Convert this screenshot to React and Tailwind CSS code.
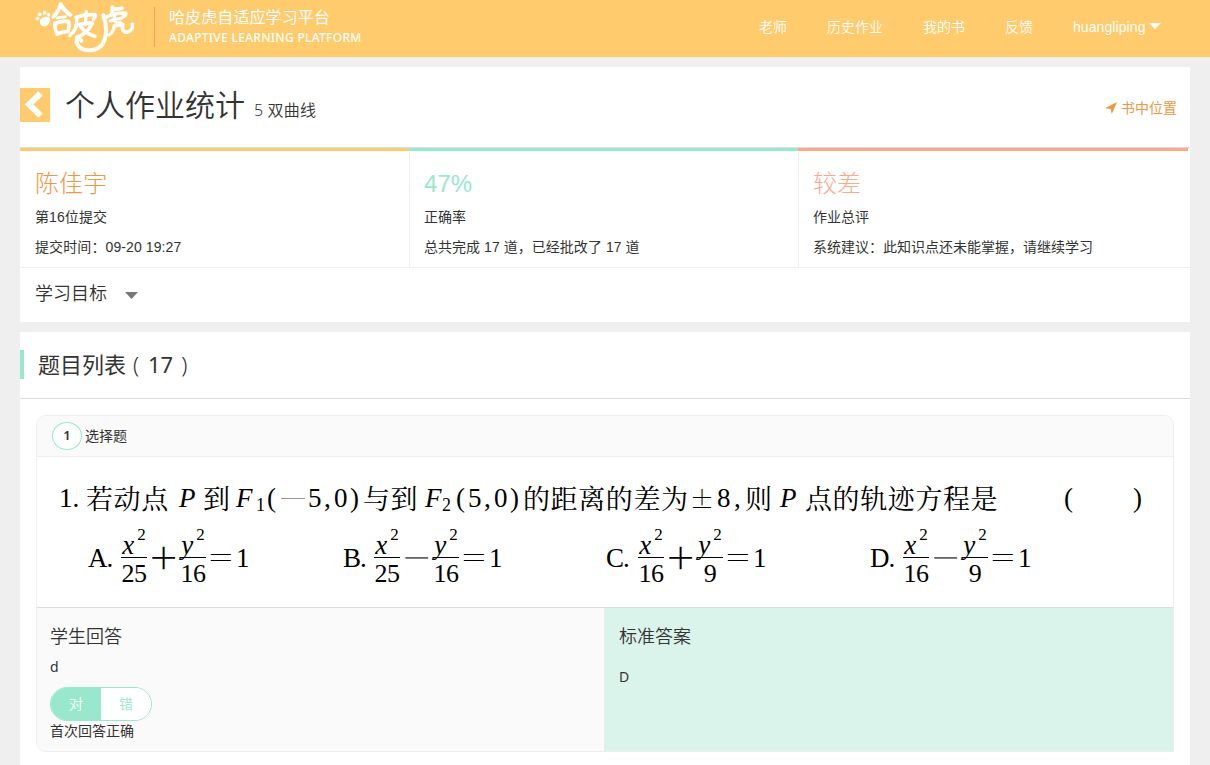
const CJK = "font-['Liberation_Sans','Noto_Sans_CJK_SC',sans-serif]";
const UI = "font-['Noto_Sans','Noto_Sans_CJK_SC',sans-serif]";

function Logo() {
  return (
    <svg width="104" height="56" viewBox="0 0 312 168" className="shrink-0" fill="none" stroke="#fff" strokeWidth="12" strokeLinecap="round" strokeLinejoin="round">
      <g fill="#fff" stroke="none">
        <path d="M18 66 C16 54 28 50 38 50 C50 50 50 60 45 69 C42 78 34 81 29 79 C22 78 18 73 18 66Z" />
        <circle cx="10" cy="56" r="5.500" />
        <ellipse cx="17" cy="43" rx="5.500" ry="6" />
        <ellipse cx="32" cy="38" rx="6" ry="6.500" />
        <ellipse cx="44" cy="44" rx="4.500" ry="5.500" />
      </g>
      <path d="M80 13 C76 28 66 42 58 51" />
      <path d="M80 13 C88 26 98 38 109 45" />
      <path d="M70 54 L94 50" strokeWidth="9" />
      <path d="M62 69 C62 80 64 92 70 103 C78 96 92 96 102 94 C105 84 107 74 104 65 C92 63 74 65 64 70" strokeWidth="11" />
      <path d="M126 52 C142 46 162 43 183 44 C186 48 182 54 178 58" strokeWidth="11" />
      <path d="M157 34 L154 74" strokeWidth="10" />
      <path d="M128 54 C130 76 122 96 108 106" strokeWidth="11" />
      <path d="M136 74 C150 70 164 68 175 69 C166 88 148 106 128 112" strokeWidth="11" />
      <path d="M140 80 C150 94 166 104 182 109" strokeWidth="11" />
      <path d="M236 22 L234 44" strokeWidth="12" />
      <path d="M238 29 L264 25" strokeWidth="11" />
      <path d="M210 55 C224 44 252 38 275 39 C276 43 272 48 267 51" strokeWidth="11" />
      <path d="M208 46 C218 74 222 112 202 137 C184 156 144 156 132 136 C122 119 132 108 142 122" strokeWidth="12" />
      <path d="M228 63 C242 57 252 55 264 55 M242 46 C238 66 246 70 259 67" strokeWidth="9" />
      <path d="M241 76 C240 88 235 98 226 105" strokeWidth="10" />
      <path d="M247 76 L266 73 C263 91 270 99 281 96 C292 93 298 82 295 73" strokeWidth="11" />
    </svg>
  );
}

function Seg({ w, children, className = "" }) {
  return <span className={"shrink-0 whitespace-nowrap " + className} style={{ width: w }}>{children}</span>;
}

const han = "font-['Noto_Serif_CJK_SC','Noto_Sans_CJK_SC',serif] text-[27px] font-normal tracking-[0.600px]";
const thin = "font-['Noto_Serif_CJK_SC',serif] font-extralight";

function QuestionLine() {
  return (
    <div className="flex h-[40px] items-center leading-[40px] text-[27px] text-black">
      <Seg w={27}>1.</Seg>
      <Seg w={93} className={han}>若动点</Seg>
      <Seg w={24} className="italic">P</Seg>
      <Seg w={33} className={han}>到</Seg>
      <Seg w={20} className="italic">F</Seg>
      <Seg w={11} className="text-[18px] translate-y-[7px]">1</Seg>
      <Seg w={14}>(</Seg>
      <Seg w={27}><span className="block h-px w-[24px] bg-[#999]" aria-label="−" /></Seg>
      <Seg w={16}>5</Seg>
      <Seg w={10}>,</Seg>
      <Seg w={16}>0</Seg>
      <Seg w={13}>)</Seg>
      <Seg w={62} className={han}>与到</Seg>
      <Seg w={17} className="italic">F</Seg>
      <Seg w={14} className="text-[18px] translate-y-[7px]">2</Seg>
      <Seg w={12}>(</Seg>
      <Seg w={16}>5</Seg>
      <Seg w={10}>,</Seg>
      <Seg w={16}>0</Seg>
      <Seg w={13}>)</Seg>
      <Seg w={167} className={han}>的距离的差为</Seg>
      <Seg w={27} className={thin + " text-[24px]"}>±</Seg>
      <Seg w={17}>8</Seg>
      <Seg w={11}>,</Seg>
      <Seg w={35} className={han}>则</Seg>
      <Seg w={25} className="italic">P</Seg>
      <Seg w={259} className={han}>点的轨迹方程是</Seg>
      <Seg w={69}>(</Seg>
      <Seg w={12}>)</Seg>
    </div>
  );
}

function Frac({ v, d }) {
  return (
    <span className="flex w-[26px] shrink-0 flex-col items-center">
      <span className="flex h-[28px] items-end leading-[24px]">
        <span className="text-[27px] italic leading-[24px] w-[15px]">{v}</span>
        <sup className="self-start text-[17px] leading-[12px] top-0">2</sup>
      </span>
      <span className="h-px w-full bg-black" />
      <span className="h-[28px] text-[26px] leading-[32px] tracking-[-0.500px]">{d}</span>
    </span>
  );
}

function Option({ letter, op, a, b, w, lw }) {
  return (
    <div className="flex shrink-0 items-center text-[27px] leading-[32px] text-black" style={{ width: w }}>
      <span className="shrink-0 tracking-[-1px]" style={{ width: lw }}>{letter}.</span>
      <Frac v="x" d={a} />
      <span className={"flex w-[33px] shrink-0 justify-center " + thin + (op === "−" ? " text-[#666]" : "")}>
        <span className="inline-block -translate-y-[3px] scale-x-[1.7] scale-y-[1.6]">{op}</span>
      </span>
      <Frac v="y" d={b} />
      <span className={"flex w-[30px] shrink-0 justify-center " + thin}>
        <span className="inline-block -translate-y-[2px] scale-x-[1.5]">=</span>
      </span>
      <span>1</span>
    </div>
  );
}

function Stat({ title, color, bar, body, lines, w }) {
  return (
    <div className={"flex shrink-0 flex-col border-t-[3px] " + bar} style={{ width: w }}>
      <div className={"flex h-[116px] flex-col pt-[18px] " + body}>
        <div className={"h-[33px] text-[24px] font-light leading-[30px] " + color}>{title}</div>
        {lines.map((l) => (
          <div key={l} className="h-[30px] whitespace-pre text-[14px] leading-[30px]">{l}</div>
        ))}
      </div>
    </div>
  );
}

export default function App() {
  return (
    <div className={"h-[765px] w-[1210px] overflow-hidden bg-[#efefef] text-[#333] " + CJK}>
      <header className="flex h-[57px] bg-[#ffcb6c] text-white">
        <div className="flex w-[154px] pl-[34px]"><Logo /></div>
        <div className="mt-[7px] h-[40px] w-px bg-[#f4a04e]" />
        <div className={"ml-[14px] mt-[7px] flex w-[560px] flex-col " + UI}>
          <span className="text-[16px] leading-[21px] tracking-[0.100px]">哈皮虎自适应学习平台</span>
          <span className="text-[12px] font-medium leading-[19px] tracking-[0.300px]">ADAPTIVE LEARNING PLATFORM</span>
        </div>
        <nav className="ml-[30px] flex h-[54px] items-center text-[14px] font-[350]">
          <a className="w-[68px]">老师</a>
          <a className="w-[96px]">历史作业</a>
          <a className="w-[82px]">我的书</a>
          <a className="w-[68px]">反馈</a>
          <a className="flex items-center font-normal tracking-[0.080px]">
            huangliping
            <svg width="12" height="6" viewBox="0 0 12 6" className="ml-[3px] -translate-y-px" fill="#fff"><path d="M0 0H12L6 6Z" /></svg>
          </a>
        </nav>
      </header>

      <section className="mx-[20px] mt-[10px] h-[255px] bg-white">
        <div className="flex h-[81px] border-b border-[#ddd]">
          <div className="mt-[21px] flex h-[34px] w-[30px] items-center bg-[#ffcb6c] pl-[3px]">
            <svg width="22" height="30" viewBox="0 0 22 30" fill="none" stroke="#fff" strokeWidth="6"><path d="M17.500 3.500L6 14.500L17.500 25.500" /></svg>
          </div>
          <h1 className={"ml-[15px] flex items-baseline pt-[14px] font-[350] " + UI}>
            <span className="text-[30px] leading-[48px]">个人作业统计</span>
            <small className="ml-[9px] text-[16px] leading-[24px] tracking-[0.150px]">5 双曲线</small>
          </h1>
          <div className="ml-auto mr-[13px] flex h-[82px] items-center text-[14px] text-[#f0983f]">
            <svg width="12" height="12" viewBox="0 0 12 12" className="mr-[4px]" fill="#f0983f"><path d="M12 0L6.800 12L5.600 7L0 6.200Z" /></svg>
            书中位置
          </div>
        </div>
        <div className="flex h-[120px] border-b border-[#eee]">
          <Stat w={389} title="陈佳宇" color="text-[#f0983f]" bar="border-[#ffcb6c]" body="pl-[15px] tracking-[0.100px]" lines={["第16位提交", "提交时间：09-20 19:27"]} />
          <Stat w={389} title="47%" color="text-[#98e8cd]" bar="border-[#98e8cd]" body="border-l border-[#eee] pl-[14px] tracking-[0.040px]" lines={["正确率", "总共完成 17 道，已经批改了 17 道"]} />
          <Stat w={390} title="较差" color="text-[#ffa788]" bar="border-[#ffa788]" body="border-l border-[#eee] pl-[14px]" lines={["作业总评", "系统建议：此知识点还未能掌握，请继续学习"]} />
        </div>
        <div className="flex h-[53px] items-center pl-[15px] text-[18px] font-[350]">
          学习目标
          <svg width="13" height="7" viewBox="0 0 13 7" className="ml-[18px] mt-[2px]" fill="#777"><path d="M0 0H13L6.500 7Z" /></svg>
        </div>
      </section>

      <section className="mx-[20px] mt-[10px] h-[433px] bg-white">
        <div className="flex h-[67px] border-b border-[#ddd]">
          <div className="mt-[18px] h-[29px] w-[4px] bg-[#98e8cd]" />
          <h2 className={"ml-[14px] mt-[15px] flex text-[22px] leading-[34px] " + UI}>
            <span>题目列表</span>
            <span className="w-[22px] pl-[7px] font-light">(</span>
            <span>17</span>
            <span className="pl-[8px] font-light">)</span>
          </h2>
        </div>
        <article className="mx-[16px] mt-[16px] w-[1138px] overflow-hidden rounded-[10px] rounded-br-none border border-[#eee]">
          <div className="flex h-[41px] items-center border-b border-[#eee] bg-[#fafafa] pl-[15px] text-[14px]">
            <span className={"mr-[3px] flex h-[28px] w-[30px] items-center justify-center rounded-[50%] border border-[#98e8cd] bg-white text-[13px] font-semibold " + UI}>1</span>
            选择题
          </div>
          <div className="h-[151px] border-b border-[#ddd] pl-[22px] pt-[21px] font-['Liberation_Serif',serif]">
            <QuestionLine />
            <div className="ml-[29px] flex pt-[11px]">
              <Option letter="A" op="+" a="25" b="16" w={255} lw={33} />
              <Option letter="B" op="−" a="25" b="16" w={263} lw={31} />
              <Option letter="C" op="+" a="16" b="9" w={264} lw={32} />
              <Option letter="D" op="−" a="16" b="9" w={180} lw={33} />
            </div>
          </div>
          <div className="flex h-[143px]">
            <div className="w-[567px] bg-[#fafafa] pl-[13px] pt-[14px]">
              <h3 className="text-[18px] font-[350] leading-[30px]">学生回答</h3>
              <p className={"text-[14px] leading-[30px] " + UI}>d</p>
              <div className="mt-[5px] flex h-[34px] w-[102px] overflow-hidden rounded-full border border-[#98e8cd] text-center text-[14px] font-[350] leading-[32px]">
                <span className="w-[50px] bg-[#98e8cd] text-white">对</span>
                <span className="w-[50px] bg-white text-[#98e8cd]">错</span>
              </div>
              <p className="text-[14px] leading-[20px]">首次回答正确</p>
            </div>
            <div className="w-[569px] bg-[#dbf4eb] pl-[15px] pt-[14px]">
              <h3 className="text-[18px] font-[350] leading-[30px]">标准答案</h3>
              <p className={"mt-[10px] text-[14px] leading-[30px] " + UI}>D</p>
            </div>
          </div>
        </article>
      </section>
    </div>
  );
}
